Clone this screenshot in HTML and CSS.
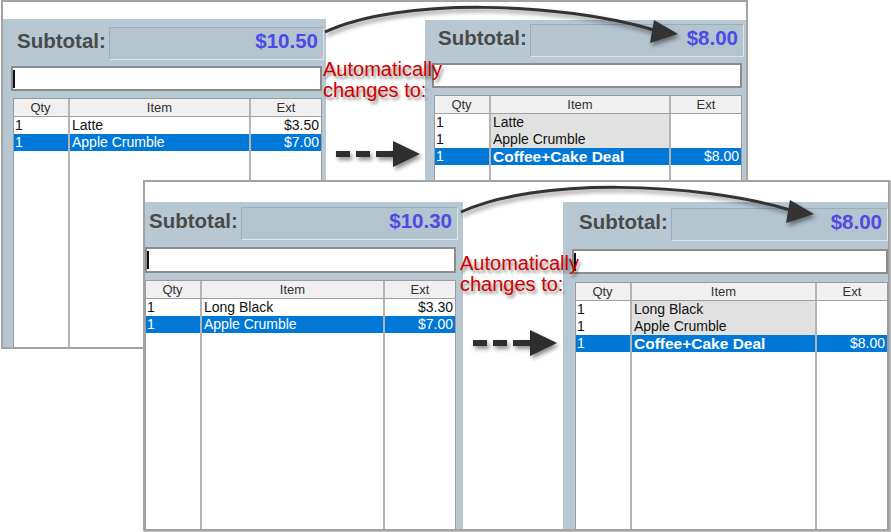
FILE: index.html
```html
<!DOCTYPE html>
<html lang="en">
  <head>
    <meta charset="UTF-8" />
    <meta name="viewport" content="width=device-width, initial-scale=1.0" />
    <title>Combo Deal</title>
    <link rel="stylesheet" href="styles.css">
  </head>
  <body>
    <div class="canvas">
      <!-- first example: latte + crumble -->
      <div class="card card-top">
        <div class="panel panel-a">
          <div class="sub">
            <span class="sub-label">Subtotal:</span>
            <span class="sub-box">$10.50</span>
          </div>
          <div class="entry"><span class="caret"></span></div>
          <div class="list two">
            <div class="row head"><div>Qty</div><div>Item</div><div>Ext</div></div>
            <div class="row"><div>1</div><div>Latte</div><div class="ext">$3.50</div></div>
            <div class="row sel"><div>1</div><div>Apple Crumble</div><div class="ext">$7.00</div></div>
            <div class="row fill"><div></div><div></div><div></div></div>
          </div>
        </div>
        <div class="middle">
          <div class="note note-top">Automatically<br>changes to:</div>
        </div>
        <div class="panel panel-b">
          <div class="sub">
            <span class="sub-label">Subtotal:</span>
            <span class="sub-box">$8.00</span>
          </div>
          <div class="entry"></div>
          <div class="list three">
            <div class="row head"><div>Qty</div><div>Item</div><div>Ext</div></div>
            <div class="row grouped"><div>1</div><div>Latte</div><div></div></div>
            <div class="row grouped"><div>1</div><div>Apple Crumble</div><div></div></div>
            <div class="row sel"><div>1</div><div class="deal">Coffee+Cake Deal</div><div class="ext">$8.00</div></div>
            <div class="row fill"><div></div><div></div><div></div></div>
          </div>
        </div>
      </div>

      <!-- second example: long black + crumble -->
      <div class="card card-bottom">
        <div class="panel panel-c">
          <div class="sub">
            <span class="sub-label">Subtotal:</span>
            <span class="sub-box">$10.30</span>
          </div>
          <div class="entry"><span class="caret"></span></div>
          <div class="list two">
            <div class="row head"><div>Qty</div><div>Item</div><div>Ext</div></div>
            <div class="row"><div>1</div><div>Long Black</div><div class="ext">$3.30</div></div>
            <div class="row sel"><div>1</div><div>Apple Crumble</div><div class="ext">$7.00</div></div>
            <div class="row fill"><div></div><div></div><div></div></div>
          </div>
        </div>
        <div class="middle">
          <div class="note note-bottom">Automatically<br>changes to:</div>
        </div>
        <div class="panel panel-d">
          <div class="sub">
            <span class="sub-label">Subtotal:</span>
            <span class="sub-box">$8.00</span>
          </div>
          <div class="entry"><span class="caret"></span></div>
          <div class="list three">
            <div class="row head"><div>Qty</div><div>Item</div><div>Ext</div></div>
            <div class="row grouped"><div>1</div><div>Long Black</div><div></div></div>
            <div class="row grouped"><div>1</div><div>Apple Crumble</div><div></div></div>
            <div class="row sel"><div>1</div><div class="deal">Coffee+Cake Deal</div><div class="ext">$8.00</div></div>
            <div class="row fill"><div></div><div></div><div></div></div>
          </div>
        </div>
      </div>

      <svg class="arrows" width="891" height="532" viewBox="0 0 891 532">
        <defs>
          <g id="curve">
            <path d="M325 32 C400 -3 560 2 654 30" fill="none" stroke="#333" stroke-width="3" />
            <polygon points="678,34 654,20 650,43" fill="#333" />
          </g>
          <g id="dashes" fill="#2e2e2e">
            <rect x="336" y="151" width="14" height="6" />
            <rect x="356" y="151" width="14" height="6" />
            <rect x="376" y="151" width="19" height="6" />
            <polygon points="393,141 420,154 393,167" />
          </g>
        </defs>
        <use href="#curve" />
        <use href="#dashes" />
        <use href="#curve" x="136" y="180" />
        <use href="#dashes" x="137" y="189" />
      </svg>
    </div>
  </body>
</html>
```

FILE: styles.css
```css
body {
  margin: 0;
  background: #fff;
  font-family: "Liberation Sans", Arial, sans-serif;
}

.canvas {
  position: relative;
  width: 891px;
  height: 532px;
  overflow: hidden;
}

.card {
  position: absolute;
  box-sizing: border-box;
  display: flex;
  background: #fff;
  border: 2px solid #a3a3a3;
}

.card-top {
  left: 1px;
  top: 0;
  width: 747px;
  height: 349px;
  padding-top: 17px;
}

.card-bottom {
  left: 143px;
  top: 180px;
  width: 747px;
  height: 351px;
  padding-top: 20px;
  box-shadow: 1px 1px 1px rgba(0, 0, 0, 0.25);
}

.panel {
  flex: none;
  box-sizing: border-box;
  display: flex;
  flex-direction: column;
  background: #b7c8d3;
}

.panel-a {
  width: 323px;
  padding: 8px 2px 0 8px;
}

.panel-b {
  width: 321px;
  margin-top: 1px;
  padding: 4px 2px 0 7px;
}

.panel-c {
  width: 318px;
  padding: 5px 5px 0 0;
}

.panel-d {
  width: 325px;
  padding: 6px 0 0 9px;
}

.middle {
  flex: 1;
  min-width: 0;
}

.note {
  position: relative;
  z-index: 1;
  margin-left: -3px;
  white-space: nowrap;
  color: #d00000;
  font-size: 20px;
  line-height: 21px;
  text-shadow: 2px 3px 3px rgba(0, 0, 0, 0.45);
}

.note-top {
  margin-top: 40px;
}

.note-bottom {
  margin-top: 51px;
}

/* subtotal row */
.sub {
  display: flex;
  height: 33px;
  padding-left: 6px;
}

.panel-c .sub {
  padding-left: 4px;
}

.panel-d .sub {
  padding-left: 7px;
}

.sub-label {
  margin-right: 3px;
  font-size: 20.5px;
  font-weight: bold;
  line-height: 27px;
  color: #4a4a4a;
}

.sub-box {
  flex: 1;
  box-sizing: border-box;
  height: 33px;
  padding-right: 5px;
  background: #b3c4cf;
  border: 1px solid;
  border-color: #9cadb9 #dde6ec #dde6ec #9cadb9;
  text-align: right;
  font-size: 20.5px;
  font-weight: bold;
  line-height: 25px;
  color: #4b4be6;
}

/* entry box */
.entry {
  box-sizing: border-box;
  height: 25px;
  margin: 6px 2px 0 0;
  background: #fff;
  border: 2px solid #8c8c8c;
}

.panel-c .entry {
  margin-top: 7px;
  height: 26px;
}

.panel-d .entry {
  margin: 8px 0 0 0;
}

.caret {
  display: block;
  width: 2px;
  height: 18px;
  margin-top: 2px;
  background: #111;
}

/* item list */
.list {
  flex: 1;
  display: grid;
  grid-template-columns: 56px 1fr 70px;
  margin: 7px 2px 0 2px;
  background: #fff;
  border: 1px solid #9a9a9a;
  border-bottom: none;
  font-size: 14px;
  line-height: 17px;
  color: #111;
}

.panel-c .list {
  margin-left: 0;
}

.panel-d .list {
  margin: 8px 0 0 3px;
}

.list.two {
  grid-template-rows: 18px 17px 17px 1fr;
}

.list.three {
  grid-template-rows: 18px 17px 17px 17px 1fr;
}

.row {
  display: contents;
}

.row > div {
  box-sizing: border-box;
  padding: 0 2px;
  white-space: nowrap;
  overflow: hidden;
}

.row > div:first-child {
  padding-left: 1px;
}

.row > div:not(:last-child) {
  border-right: 2px solid #b4b4b4;
}

.row.head > div {
  background: #f0f0f0;
  border-bottom: 1px solid #a0a0a0;
  text-align: center;
  font-size: 13px;
  color: #333;
}

.row.grouped > div:nth-child(2) {
  background: #e1e1e1;
}

.row.sel > div {
  background: #0078d7;
  color: #fff;
}

.ext {
  text-align: right;
}

.deal {
  font-size: 15.5px;
  font-weight: bold;
}

.arrows {
  position: absolute;
  left: 0;
  top: 0;
  pointer-events: none;
  filter: drop-shadow(2px 3px 2px rgba(0, 0, 0, 0.45));
}
```
